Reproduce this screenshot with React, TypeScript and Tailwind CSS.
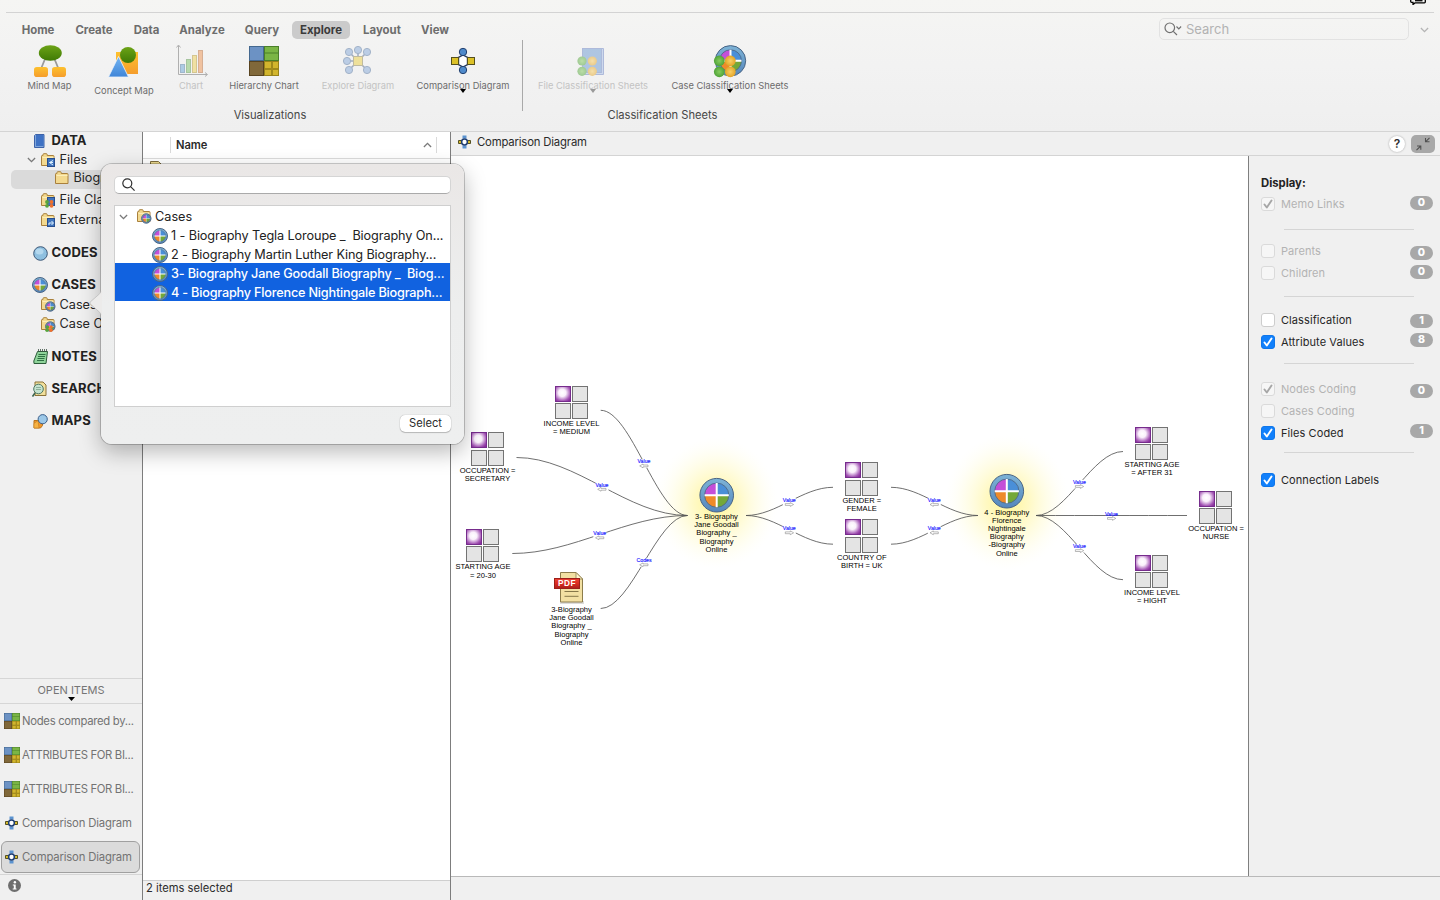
import React from "react";

type IconProps = { className?: string };

function Defs() {
  return (
    <svg className="absolute h-0 w-0" aria-hidden="true">
      <defs>
        <radialGradient id="purple" cx="0.45" cy="0.42" r="0.68">
          <stop offset="0" stopColor="#ffffff" />
          <stop offset="0.36" stopColor="#faf0fb" />
          <stop offset="0.8" stopColor="#a457b5" />
          <stop offset="1" stopColor="#8a309d" />
        </radialGradient>
        <radialGradient id="glow">
          <stop offset="0" stopColor="#fff27a" stopOpacity="0.8" />
          <stop offset="0.35" stopColor="#fff494" stopOpacity="0.55" />
          <stop offset="0.7" stopColor="#fff9b8" stopOpacity="0.24" />
          <stop offset="1" stopColor="#fffde8" stopOpacity="0" />
        </radialGradient>
        <linearGradient id="ring" x1="0" y1="0" x2="0" y2="1">
          <stop offset="0" stopColor="#7db3d6" />
          <stop offset="1" stopColor="#5587bd" />
        </linearGradient>
        <linearGradient id="leaf" x1="0" y1="0" x2="0" y2="1">
          <stop offset="0" stopColor="#6ca316" />
          <stop offset="1" stopColor="#3f7a05" />
        </linearGradient>
        <linearGradient id="amber" x1="0" y1="0" x2="0" y2="1">
          <stop offset="0" stopColor="#fdc12f" />
          <stop offset="1" stopColor="#f59d2c" />
        </linearGradient>
        <linearGradient id="sky" x1="0" y1="0" x2="0" y2="1">
          <stop offset="0" stopColor="#74b5f2" />
          <stop offset="1" stopColor="#3f85d8" />
        </linearGradient>
        <radialGradient id="ballGreen">
          <stop offset="0" stopColor="#86cc5e" />
          <stop offset="1" stopColor="#4fa338" />
        </radialGradient>
        <radialGradient id="ballGold">
          <stop offset="0" stopColor="#f8cf66" />
          <stop offset="1" stopColor="#e3a426" />
        </radialGradient>
        <linearGradient id="pdfRed" x1="0" y1="0" x2="0" y2="1">
          <stop offset="0" stopColor="#ea4433" />
          <stop offset="0.5" stopColor="#dc2c22" />
          <stop offset="1" stopColor="#a81f1b" />
        </linearGradient>
      </defs>
    </svg>
  );
}

function CaseGlyph({ cx, cy, r }: { cx: number; cy: number; r: number }) {
  const i = r * 0.7;
  return (
    <g>
      <circle cx={cx} cy={cy} r={r - 0.5} fill="url(#ring)" stroke="#4a6585" strokeWidth="1" />
      <path d={`M${cx} ${cy}V${cy - i}A${i} ${i} 0 0 0 ${cx - i} ${cy}Z`} fill="#c44fd8" />
      <path d={`M${cx} ${cy}H${cx + i}A${i} ${i} 0 0 0 ${cx} ${cy - i}Z`} fill="#4a8fd8" />
      <path d={`M${cx} ${cy}H${cx - i}A${i} ${i} 0 0 0 ${cx} ${cy + i}Z`} fill="#ee8a2a" />
      <path d={`M${cx} ${cy}V${cy + i}A${i} ${i} 0 0 0 ${cx + i} ${cy}Z`} fill="#74a838" />
      <circle cx={cx} cy={cy} r={i} fill="none" stroke="#4f6a88" strokeWidth={r > 12 ? 0.9 : 0.5} />
      <path
        d={`M${cx - i} ${cy}H${cx + i}M${cx} ${cy - i}V${cy + i}`}
        stroke="#ffffff"
        strokeWidth={r > 12 ? 2 : r > 6 ? 1 : 0.4}
      />
    </g>
  );
}

const CaseIcon = ({ className = "" }: IconProps) => (
  <svg viewBox="0 0 16 16" className={`h-4 w-4 shrink-0 ${className}`}>
    <CaseGlyph cx={8} cy={8} r={8} />
  </svg>
);

const HierarchyIcon = ({ className = "" }: IconProps) => (
  <svg viewBox="0 0 30 30" className={`shrink-0 ${className}`}>
    <rect width="15" height="15" fill="#44688f" />
    <rect x="1" y="1" width="13" height="13" fill="#6c92c4" />
    <rect x="15" width="15" height="15" fill="#4a7f2a" />
    <path d="M16 1h13v5.500H16zM16 7.500h13v6.500H16z" fill="#7ab545" />
    <rect y="15" width="15" height="15" fill="#594420" />
    <rect x="1" y="16" width="13" height="13" fill="#80683a" />
    <rect x="15" y="15" width="15" height="15" fill="#97821a" />
    <path d="M16 16h6v6h-6zM24 16h5v6h-5zM16 24h6v5h-6zM24 24h5v5h-5z" fill="#d2b52d" />
    <path d="M22.500 16h1v13h-1zM16 22.500h13v1H16z" fill="#a88f1e" />
  </svg>
);

const CompareIcon = ({ className = "" }: IconProps) => (
  <svg viewBox="0 0 13 14" className={`h-[14px] w-[13px] shrink-0 ${className}`}>
    <path d="M4.500 0.500h4v3h-4zM4.500 10.500h4v3h-4z" fill="#5b93d0" />
    <path d="M0.500 5.500h3v3h-3zM9.500 5.500h3v3h-3z" fill="#d9bd2c" stroke="#545022" />
    <circle cx="6.500" cy="7" r="2.900" fill="#ffffff" stroke="#1f3f73" strokeWidth="1.500" />
  </svg>
);

const FolderShape = () => (
  <g>
    <path
      d="M0.500 12.500V3.200q0-.7.7-.7H2V1.600q0-.9.800-.9h2.600q.8 0 .8.900v.9h6q.8 0 .8.800v9.200z"
      fill="#f3d98f"
      stroke="#a9803c"
    />
    <path d="M1.500 4.500H12.500" stroke="#fbedb9" />
  </g>
);

const FolderIcon = ({ kind }: { kind?: "file" | "fileClass" | "ext" | "case" | "caseClass" }) => (
  <svg viewBox="0 0 15 15" className="h-[15px] w-[15px] shrink-0">
    <FolderShape />
    {(kind === "file" || kind === "ext") && (
      <g>
        <rect x="6.500" y="5.500" width="7" height="8" fill="#3f74bd" stroke="#274d8e" />
        {kind === "file" ? (
          <path d="M12 7.500l-3.500 2 3.500 2.500M8.500 9.500h3.500" fill="none" stroke="#dff2ff" />
        ) : (
          <path d="M8 12V10h4M10.500 8l2 2-2 2" fill="none" stroke="#dff2ff" />
        )}
      </g>
    )}
    {kind === "fileClass" && (
      <g>
        <rect x="6.500" y="4.500" width="7" height="8" fill="#3f74bd" stroke="#274d8e" />
        <circle cx="6" cy="9" r="1.900" fill="#58a53c" />
        <circle cx="6" cy="12.800" r="1.900" fill="#58a53c" />
        <circle cx="10.500" cy="9" r="1.900" fill="#f0702c" />
        <circle cx="10.500" cy="12.800" r="1.900" fill="#f0702c" />
      </g>
    )}
    {(kind === "case" || kind === "caseClass") && <CaseGlyph cx={9.300} cy={9.500} r={5.200} />}
    {kind === "caseClass" && (
      <g>
        <circle cx="6.500" cy="10" r="1.700" fill="#58a53c" />
        <circle cx="6" cy="13.200" r="1.700" fill="#58a53c" />
        <circle cx="10" cy="10" r="1.700" fill="#f0702c" />
        <circle cx="10" cy="13.200" r="1.700" fill="#f0702c" />
      </g>
    )}
  </svg>
);

const BookIcon = () => (
  <svg viewBox="0 0 14 15" className="h-[15px] w-[14px] shrink-0">
    <path d="M3.500.5h8.500v13H2.500V1.500z" fill="#7ea6dc" stroke="#3d62a8" />
    <rect x="4" y="1" width="7.500" height="11" fill="#3f72c4" />
  </svg>
);

const CodesIcon = () => (
  <svg viewBox="0 0 15 15" className="ml-[0.5px] h-[15px] w-[15px] shrink-0">
    <circle cx="7.500" cy="7.500" r="6.800" fill="#8fc0e0" stroke="#3c5878" />
    <ellipse cx="6.500" cy="5.500" rx="4" ry="3" fill="#b4d8ee" />
  </svg>
);

const NotesIcon = () => (
  <svg viewBox="0 0 15 16" className="ml-[0.5px] h-[16px] w-[15px] shrink-0">
    <path d="M4.500 2.500h10L13 14.500H1L.8 12z" fill="#8fd49a" stroke="#2c5c3a" />
    <path d="M5.500 5.500h7M5 7.500h7M4.500 9.500h7M4 11.500h7" stroke="#2f7043" />
    <path d="M5.500 0v3M7.500 0v3M9.500 0v3M11.500 0v3M13.500 0v3" stroke="#3c5044" strokeWidth=".8" />
  </svg>
);

const SearchDocIcon = () => (
  <svg viewBox="0 0 15 16" className="h-[16px] w-[15px] shrink-0">
    <path d="M3 1h8l3 3v10.500H3z" fill="#f1df9b" stroke="#8a7238" />
    <circle cx="6.500" cy="8" r="4.800" fill="#c5e3cf" stroke="#4c7663" />
    <path d="M4 6.500h5M4 8.500h5" stroke="#8cb09b" />
    <path d="M3 12l-2.500 3.500" stroke="#3d6650" strokeWidth="1.600" />
  </svg>
);

const MapsIcon = () => (
  <svg viewBox="0 0 15 15" className="ml-[0.5px] h-[15px] w-[15px] shrink-0">
    <path d="M1 6.500h8.500v5l-2 2.500H1z" fill="#f0962c" stroke="#b8741c" />
    <path d="M1 9.500l4-3 1 7.500H1z" fill="#f6b243" stroke="#c98324" strokeWidth=".7" />
    <circle cx="9.700" cy="5.200" r="4.600" fill="#9cc8e8" stroke="#3c5f8a" />
  </svg>
);

const Chevron = ({ className = "" }: IconProps) => (
  <svg viewBox="0 0 10 6" className={`h-[6px] w-[9px] shrink-0 ${className}`} fill="none" stroke="currentColor" strokeWidth="1.500">
    <path d="M1 .8l4 4 4-4" />
  </svg>
);

/* ---------- ribbon ---------- */

const tabs = [
  { t: "Home", w: "w-[48px]" },
  { t: "Create", w: "w-[54px]" },
  { t: "Data", w: "w-[41px]" },
  { t: "Analyze", w: "w-[60px]" },
  { t: "Query", w: "w-[50px]" },
  { t: "Explore", w: "w-[58px]", on: true },
  { t: "Layout", w: "w-[54px]" },
  { t: "View", w: "w-[42px]" },
];

function Tool({ label, w, dim, drop, low, children }: { label: string; w: string; dim?: boolean; drop?: boolean; low?: boolean; children: React.ReactNode }) {
  return (
    <div className={`relative flex flex-col items-center ${w}`}>
      <svg viewBox="0 0 34 34" className={`h-[34px] w-[34px] ${dim ? "opacity-50" : ""}`}>
        {children}
      </svg>
      <span
        className={`text-[9.3px] leading-[14px] tracking-[0.01px] whitespace-nowrap ${low ? "mt-[6px]" : "mt-px"} ${dim ? "text-[#c3c3c3]" : "text-[#6c6c6c]"}`}
      >
        {label}
      </span>
      {drop && (
        <svg viewBox="0 0 6 4" className={`absolute top-[45px] h-[4px] w-[6px] ${dim ? "text-[#9a9a9a]" : "text-black"}`}>
          <path d="M0 0h6L3 4z" fill="currentColor" />
        </svg>
      )}
    </div>
  );
}

const Balls = ({ x, y, s, r }: { x: number; y: number; s: number; r: number }) => (
  <g>
    <circle cx={x} cy={y} r={r} fill="url(#ballGreen)" />
    <circle cx={x} cy={y + s} r={r} fill="url(#ballGreen)" />
    <circle cx={x + s} cy={y} r={r} fill="url(#ballGold)" />
    <circle cx={x + s} cy={y + s} r={r} fill="url(#ballGold)" />
  </g>
);

function Ribbon() {
  return (
    <header className="flex h-[132px] shrink-0 flex-col border-b border-[#d4d4d4] bg-linear-to-b from-[#f5f5f3] via-[#f2f2f2] to-[#efefef]">
      <div className="mx-[6px] flex h-[13px] shrink-0 items-start justify-end border-b border-[#d3d3d3] pr-[8px]">
        <svg viewBox="0 0 16 5" className="h-[5px] w-4" fill="none" stroke="#000000" strokeWidth="1.300">
          <path d="M.7 0v1.500q0 .8.800.8H3v2.200l2-1.600h9.500q.8 0 .8-.8V0" />
          <path d="M5 .7h7.500" />
        </svg>
      </div>
      <div className="flex h-[29px] shrink-0 items-center pt-[6px] pl-[14px]">
        <nav className="-mt-px flex gap-[5px]">
          {tabs.map((tab) => (
            <div
              key={tab.t}
              className={`flex h-[18px] items-center justify-center rounded-[5px] pt-[2px] text-[11.4px] font-bold ${tab.w} ${tab.on ? "bg-[#cbcbcb] text-[#3b3b3b]" : "text-[#6d6d6d]"}`}
            >
              {tab.t}
            </div>
          ))}
        </nav>
        <div className="mt-[-3px] mr-[11px] ml-auto flex h-[22px] w-[250px] items-center rounded-[5px] border border-[#e2e2e2] pl-[4px] text-[#707070]">
          <svg viewBox="0 0 18 14" className="h-[14px] w-[18px]" fill="none" stroke="currentColor" strokeWidth="1.200">
            <circle cx="5.800" cy="5.800" r="4.800" />
            <path d="M9.300 9.300l3.700 3.700M12.500 4.500l2.300 2.300 2.300-2.300" />
          </svg>
          <span className="ml-[4px] pt-px text-[13px] text-[#b2b2b2]">Search</span>
        </div>
        <Chevron className="mt-[-2px] mr-[11px] text-[#b5b5b5]" />
      </div>
      <div className="flex pl-[14px]">
        <section className="w-[508px] pt-[2px]">
          <div className="flex h-[62px]">
            <Tool label="Mind Map" w="w-[71px]">
              <path d="M12 15L7.500 26M21.500 15L26 26" stroke="#9a9a9a" strokeWidth="1.800" />
              <ellipse cx="17.300" cy="9" rx="11.500" ry="7.700" fill="url(#leaf)" />
              <rect x="1" y="23" width="14" height="10" rx="2.800" fill="url(#amber)" />
              <rect x="19" y="23" width="14" height="10" rx="2.800" fill="url(#amber)" />
            </Tool>
            <Tool label="Concept Map" w="w-[78px]" low>
              <rect x="9" y="8" width="22" height="22" fill="url(#amber)" />
              <circle cx="21" cy="11" r="8" fill="url(#leaf)" />
              <path d="M11.500 12.500L21.500 33H1.500z" fill="url(#sky)" stroke="#eef4fb" strokeWidth=".8" />
            </Tool>
            <Tool label="Chart" w="w-[56px]" dim>
              <path d="M4.500 1.500V30.500H33M2.500 3.500l2-2.500 2 2.500M31 28.500l2.500 2-2.500 2" fill="none" stroke="#6f6f6f" />
              <rect x="6.500" y="20.500" width="4" height="8" fill="#6aa6d8" stroke="#4f7ea8" />
              <rect x="12.500" y="15.500" width="4" height="13" fill="#7fc46a" stroke="#5d9a4c" />
              <rect x="18.500" y="11.500" width="4" height="17" fill="#efd052" stroke="#b79a32" />
              <rect x="24.500" y="6.500" width="4" height="22" fill="#ef9350" stroke="#bd6e36" />
            </Tool>
            <Tool label="Hierarchy Chart" w="w-[90px]">
              <svg x="2" y="2" width="30" height="30" viewBox="0 0 30 30">
                <HierarchyIcon />
              </svg>
            </Tool>
            <Tool label="Explore Diagram" w="w-[98px]" dim>
              <path d="M8 8l9 9 9-9M17 6v11H6M17 17l-9 9M17 17l9 9" fill="none" stroke="#4c6690" strokeWidth="1.500" />
              <rect x="12.500" y="12.500" width="9" height="9" fill="#ecd044" stroke="#8d8450" />
              {[[8, 8], [17, 6], [26, 8], [6, 17], [8, 26], [26, 26]].map(([x, y]) => (
                <circle key={`${x}-${y}`} cx={x} cy={y} r="3.600" fill="#85a9da" stroke="#55749f" />
              ))}
            </Tool>
            <Tool label="Comparison Diagram" w="w-[112px]" drop>
              <path d="M17 11l4.500 2.500v7L17 23l-4.500-2.500v-7z" fill="#ffffff" stroke="#22375f" strokeWidth="1.400" />
              <circle cx="17" cy="8" r="3.700" fill="#4f8acb" stroke="#22406e" />
              <circle cx="17" cy="26" r="3.700" fill="#4f8acb" stroke="#22406e" />
              <rect x="5.500" y="13.500" width="7" height="7" fill="#dcc128" stroke="#55501f" />
              <rect x="21.500" y="13.500" width="7" height="7" fill="#dcc128" stroke="#55501f" />
            </Tool>
          </div>
          <p className="pl-[4px] text-center text-[11.200px] leading-[18px] text-[#474747]">Visualizations</p>
        </section>
        <div className="-mt-[2px] h-[71px] w-px bg-[#a9a9a9]" />
        <section className="w-[279px] pt-[2px]">
          <div className="flex h-[62px]">
            <Tool label="File Classification Sheets" w="w-[140px]" dim drop>
              <path d="M7 4.500h20.500v26H9" fill="#a9c2ea" stroke="#6c83c4" />
              <rect x="6.500" y="4.500" width="19" height="24" fill="#6d9ad3" stroke="#6c83c4" />
              <Balls x={6} y={17} s={10.300} r={4.600} />
            </Tool>
            <Tool label="Case Classification Sheets" w="w-[134px]" drop>
              <CaseGlyph cx={17.500} cy={16.800} r={15.700} />
              <Balls x={6.300} y={16.800} s={11} r={5.400} />
            </Tool>
          </div>
          <p className="text-center text-[11.150px] leading-[18px] text-[#474747]">Classification Sheets</p>
        </section>
      </div>
    </header>
  );
}

/* ---------- sidebar ---------- */

function Head({ icon, label, className }: { icon: React.ReactNode; label: string; className: string }) {
  return (
    <div className={`flex items-center pl-[32px] text-[13px] font-bold tracking-[0.15px] text-[#222222] ${className}`}>
      <span className="flex w-[19.500px] shrink-0 items-center">{icon}</span>
      {label}
    </div>
  );
}

function Leaf({ kind, label, className = "h-5", open }: { kind: "file" | "fileClass" | "ext" | "case" | "caseClass"; label: string; className?: string; open?: boolean }) {
  return (
    <div className={`flex items-center text-[12.7px] whitespace-nowrap text-[#262626] ${className}`}>
      <span className="flex w-[41px] shrink-0 pl-[27px]">{open && <Chevron className="text-[#7a7a7a]" />}</span>
      <FolderIcon kind={kind} />
      <span className="ml-[3.500px]">{label}</span>
    </div>
  );
}

const openItems = [
  { t: "Nodes compared by...", h: true, k: "tracking-[-0.29px]" },
  { t: "ATTRIBUTES FOR BI...", h: true, k: "tracking-[-0.33px]" },
  { t: "ATTRIBUTES FOR BI...", h: true, k: "tracking-[-0.33px]" },
  { t: "Comparison Diagram", k: "tracking-[-0.17px]" },
  { t: "Comparison Diagram", on: true, k: "tracking-[-0.17px]" },
];

function Sidebar() {
  return (
    <aside className="flex w-[143px] shrink-0 flex-col overflow-hidden border-r border-[#7d7d7d] bg-[#f0f0f0]">
      <Head icon={<BookIcon />} label="DATA" className="h-[18px]" />
      <Leaf kind="file" label="Files" open />
      <div className="ml-[11px] flex h-[19px] items-center rounded-l-[5px] bg-[#dadada] pb-[3px] pl-[44px] text-[12.7px] whitespace-nowrap text-[#262626]">
        <FolderIcon />
        <span className="ml-[3.500px]">Biogr</span>
      </div>
      <Leaf kind="fileClass" label="File Clas" className="mt-px h-5" />
      <Leaf kind="ext" label="External" />
      <Head icon={<CodesIcon />} label="CODES" className="mt-[13px] h-5" />
      <Head icon={<CaseIcon />} label="CASES" className="mt-[12px] h-5" />
      <Leaf kind="case" label="Cases" className="h-[19px]" />
      <Leaf kind="caseClass" label="Case C" />
      <Head icon={<NotesIcon />} label="NOTES" className="mt-[13px] h-5" />
      <Head icon={<SearchDocIcon />} label="SEARCH" className="mt-[12px] h-5" />
      <Head icon={<MapsIcon />} label="MAPS" className="mt-[12px] h-5" />

      <div className="mt-auto flex h-[26px] shrink-0 flex-col items-center border-y border-[#d6d6d6] text-[11px] leading-[23px] text-[#757575]">
        <span className="h-[18px]">OPEN ITEMS</span>
        <svg viewBox="0 0 7 4" className="h-[4px] w-[7px]">
          <path d="M0 0h7L3.500 4z" fill="#000000" />
        </svg>
      </div>
      <div className="flex shrink-0 flex-col">
        {openItems.map((o, i) => (
          <div key={i} className="flex h-[34px] items-center pr-[2px] pl-px">
            <div
              className={`flex h-8 w-full items-center rounded-[6px] border text-[11.300px] whitespace-nowrap text-[#737373] ${o.k} ${o.on ? "border-[#a0a0a0] bg-[#dbdbdb]" : "border-transparent"}`}
            >
              <span className="flex w-[20px] shrink-0 justify-center">
                {o.h ? <HierarchyIcon className="h-4 w-4" /> : <CompareIcon className="mr-px" />}
              </span>
              {o.t}
            </div>
          </div>
        ))}
      </div>
      <div className="flex h-[26px] shrink-0 items-start border-t border-[#d6d6d6] pt-[3.500px] pl-[7.500px]">
        <svg viewBox="0 0 13 13" className="h-[13px] w-[13px]">
          <circle cx="6.500" cy="6.500" r="6.500" fill="#6e6e6e" />
          <circle cx="6.900" cy="3.200" r="1.200" fill="#ffffff" />
          <path d="M4.800 5.400h2.900v4.100h.8v1H4.700v-1h1.100V6.400h-1z" fill="#ffffff" />
        </svg>
      </div>
    </aside>
  );
}

/* ---------- list ---------- */

function ListPane() {
  return (
    <section className="flex w-[308px] shrink-0 flex-col border-r border-[#7d7d7d] bg-white">
      <div className="flex h-[27px] items-center border-b border-[#dcdcdc] pl-[27px]">
        <span className="h-4 w-px bg-[#dadada]" />
        <span className="ml-[5px] pt-px text-[11.200px] font-semibold tracking-[-0.1px] text-[#2a2a2a]">Name</span>
        <Chevron className="ml-auto rotate-180 text-[#7a7a7a]" />
        <span className="mr-[13px] ml-[4px] h-4 w-px bg-[#dadada]" />
      </div>
      <svg viewBox="0 0 12 14" className="mt-[2px] ml-[7px] h-[14px] w-3">
        <path d="M.5.5h8l3 3v10H.5z" fill="#e9d68c" stroke="#7c6b3c" />
      </svg>
      <div className="mt-auto h-[20px] border-t border-[#cfcfcf] bg-[#f0f0f0] pl-[3px] text-[11.200px] leading-[15px] text-[#2b2b2b]">
        2 items selected
      </div>
    </section>
  );
}

/* ---------- diagram ---------- */

const attributes = [
  { x: 555, y: 386, g: 17, c: 571.5, b: 426, lines: ["INCOME LEVEL", "= MEDIUM"] },
  { x: 471, y: 432, g: 18, c: 487.5, b: 473, lines: ["OCCUPATION =", "SECRETARY"] },
  { x: 466, y: 529, g: 17, c: 483, b: 569.4, lines: ["STARTING AGE", "= 20-30"] },
  { x: 845, y: 462, g: 18, c: 861.8, b: 503, lines: ["GENDER =", "FEMALE"] },
  { x: 845, y: 519, g: 18, c: 861.8, b: 560, lines: ["COUNTRY OF", "BIRTH = UK"] },
  { x: 1135, y: 427, g: 17, c: 1152, b: 467, lines: ["STARTING AGE", "= AFTER 31"] },
  { x: 1199, y: 491, g: 17, c: 1216, b: 531.3, lines: ["OCCUPATION =", "NURSE"] },
  { x: 1135, y: 555, g: 17, c: 1152, b: 595.2, lines: ["INCOME LEVEL", "= HIGHT"] },
];

const edges = [
  { a: [600.7, 410.3], z: [687.5, 515.5], l: [644, 463.3], left: true, t: "Value" },
  { a: [516.5, 457.5], z: [687.5, 515.5], l: [602, 486.7], left: true, t: "Value" },
  { a: [512.3, 553.5], z: [687.5, 515.5], l: [599.8, 535.2], left: true, t: "Value" },
  { a: [600.7, 608.5], z: [687.5, 515.5], l: [644, 562.2], left: true, t: "Codes" },
  { a: [833, 487.3], z: [746, 515.5], l: [789.3, 501.9], t: "Value" },
  { a: [833, 544.2], z: [746, 515.5], l: [789.3, 530.2], t: "Value" },
  { a: [891, 487.3], z: [978, 515.5], l: [934.3, 501.9], left: true, t: "Value" },
  { a: [891, 544.2], z: [978, 515.5], l: [934.3, 530.2], left: true, t: "Value" },
  { a: [1123, 451.5], z: [1036, 515.5], l: [1079.4, 483.9], t: "Value" },
  { a: [1187, 515.5], z: [1036, 515.5], l: [1111.5, 515.8], t: "Value" },
  { a: [1123, 579.7], z: [1036, 515.5], l: [1079.4, 548], t: "Value" },
];

function Lines({ c, b, lines }: { c: number; b: number; lines: string[] }) {
  return (
    <g fontSize="7.550" textAnchor="middle" fill="#000000">
      {lines.map((t, i) => (
        <text key={i} x={c} y={b + i * 8.1}>
          {t}
        </text>
      ))}
    </g>
  );
}

function Diagram() {
  return (
    <svg viewBox="451 156 797 720" className="h-[720px] w-[797px] shrink-0 bg-white" fontFamily="'Liberation Sans', Arial, sans-serif">
      <ellipse cx="716" cy="503" rx="62" ry="66" fill="url(#glow)" />
      <ellipse cx="1007" cy="502" rx="62" ry="68" fill="url(#glow)" />
      {edges.map((e, i) => {
        const [x1, y1] = e.a;
        const [x2, y2] = e.z;
        const d = (x2 - x1) * 0.35;
        const [lx, ly] = e.l;
        const s = e.left ? -1 : 1;
        return (
          <g key={i}>
            <path d={`M${x1} ${y1}C${x1 + d} ${y1} ${x2 - d} ${y2} ${x2} ${y2}`} fill="none" stroke="#555555" strokeWidth=".85" />
            {y1 !== y2 && <rect x={lx - 6.5} y={ly - 4} width="13" height="8.500" fill="#ffffff" />}
            <text x={lx} y={ly} fontSize="5.200" textAnchor="middle" fill="#1a1aff" stroke="#1a1aff" strokeWidth=".15">
              {e.t}
            </text>
            <path
              d={`M${lx - s * 4} ${ly + 1.7}h${s * 5}v-1l${s * 3.3} 1.900l${-s * 3.300} 1.900v-1h${-s * 5}z`}
              fill="#ffffff"
              stroke="#8a8a8a"
              strokeWidth=".6"
            />
          </g>
        );
      })}
      {attributes.map((n, i) => (
        <g key={i}>
          <rect x={n.x + 0.5} y={n.y + 0.5} width="15" height="15" fill="url(#purple)" stroke="#762c8c" />
          {[[17, 0], [0, n.g], [17, n.g]].map(([dx, dy]) => (
            <rect key={`${dx}-${dy}`} x={n.x + dx + 0.5} y={n.y + dy + 0.5} width="15" height="15" fill="#e4e4e4" stroke="#737373" />
          ))}
          <Lines c={n.c} b={n.b} lines={n.lines} />
        </g>
      ))}
      <g>
        <rect x="560" y="601" width="24" height="3" fill="#dcdcdc" />
        <path d="M560.500 572.500h15.500l6.500 6.500v23h-22z" fill="#f2e0a3" stroke="#8d7d4c" />
        <path d="M576 572.500v6.500h6.500z" fill="#fff5cf" stroke="#8d7d4c" strokeWidth=".8" />
        <path d="M564.500 591.500h14M564.500 596.300h14" stroke="#857749" />
        <rect x="554.500" y="578.500" width="25" height="10" fill="url(#pdfRed)" stroke="#9c1f1a" />
        <text x="567" y="586.300" fontSize="8.200" fontWeight="bold" textAnchor="middle" fill="#ffffff" letterSpacing=".5">
          PDF
        </text>
      </g>
      <Lines c={571.5} b={612.2} lines={["3-Biography", "Jane Goodall", "Biography _", "Biography", "Online"]} />
      <CaseGlyph cx={716.7} cy={495.2} r={17.300} />
      <Lines c={716.5} b={519.2} lines={["3- Biography", "Jane Goodall", "Biography _", "Biography", "Online"]} />
      <CaseGlyph cx={1006.8} cy={491.2} r={17.300} />
      <Lines c={1006.8} b={515} lines={["4 - Biography", "Florence", "Nightingale", "Biography", "-Biography", "Online"]} />
    </svg>
  );
}

/* ---------- display panel ---------- */

function Option({ label, on, dim, n, shift = "" }: { label: string; on?: boolean; dim?: boolean; n?: number; shift?: string }) {
  const box = on && !dim ? "bg-[#1180fb] text-white border-[#0f76ea]" : dim ? "bg-[#f6f6f6] text-[#a6a6a6] border-[#dadada]" : "bg-white border-[#cdcdcd]";
  return (
    <div className="flex h-[22px] items-center pr-[7px] pl-[12px]">
      <span className={`flex h-[14px] w-[14px] items-center justify-center rounded-[3px] border ${box}`}>
        {on && (
          <svg viewBox="0 0 10 10" className="h-[10px] w-[10px]" fill="none" stroke="currentColor" strokeWidth="1.900" strokeLinecap="round" strokeLinejoin="round">
            <path d="M1.500 5.500l2.300 3L8.500 1.500" />
          </svg>
        )}
      </span>
      <span className={`ml-[6px] pt-px text-[11px] tracking-[0.08px] whitespace-nowrap ${dim ? "text-[#b3b3b3]" : "text-[#262626]"}`}>{label}</span>
      {n !== undefined && (
        <span className={`ml-auto flex h-[14px] w-[23px] items-center justify-center rounded-full bg-[#a8a8a8] text-[10.500px] font-extrabold text-white ${shift}`}>
          {n}
        </span>
      )}
    </div>
  );
}

const Rule = ({ className }: { className: string }) => <div className={`mr-[26px] ml-[35px] h-px bg-[#d5d5d5] ${className}`} />;

function DisplayPanel() {
  return (
    <aside className="flex flex-1 flex-col border-l border-[#7f7f7f] bg-[#f0f0f0] pt-[18px]">
      <h2 className="h-[19px] pl-[12px] text-[11.300px] leading-[19px] font-bold text-[#222222]">Display:</h2>
      <Option label="Memo Links" on dim n={0} shift="-translate-y-px" />
      <Rule className="mt-[14px]" />
      <div className="h-[10px]" />
      <Option label="Parents" dim n={0} shift="translate-y-[2px]" />
      <Option label="Children" dim n={0} shift="-translate-y-px" />
      <Rule className="mt-[12px] mb-[12px]" />
      <Option label="Classification" n={1} shift="translate-y-px" />
      <Option label="Attribute Values" on n={8} shift="-translate-y-[2px]" />
      <Rule className="mt-[10px] mb-[14px]" />
      <Option label="Nodes Coding" on dim n={0} shift="translate-y-[2px]" />
      <Option label="Cases Coding" dim />
      <Option label="Files Coded" on n={1} shift="-translate-y-[2px]" />
      <Rule className="mt-[8px] mb-[16px]" />
      <Option label="Connection Labels" on />
    </aside>
  );
}

function Detail() {
  return (
    <section className="flex flex-1 flex-col bg-[#f0f0f0]">
      <div className="flex h-[24px] shrink-0 items-center border-b border-[#d4d4d4] pr-[5px] pl-[6.500px]">
        <CompareIcon className="mb-[3px]" />
        <span className="mb-[2px] ml-[6.500px] text-[11.300px] tracking-[-0.16px] text-[#2a2a2a]">Comparison Diagram</span>
        <span className="ml-auto flex h-4 w-4 items-center justify-center rounded-full bg-white text-[12px] font-semibold text-[#2e2e2e] shadow-[0_0_2px_rgba(0,0,0,0.35)]">?</span>
        <span className="ml-[6px] flex h-[18px] w-6 items-center justify-center rounded-[5px] bg-[#a8a8a8]">
          <svg viewBox="0 0 16 14" className="h-[14px] w-4" fill="none" stroke="#515151" strokeWidth="1.100">
            <path d="M14.500 .8l-4 4M10.500 1v3.800h4M1.500 13.200l4.200-4.200M2 9h3.800v3.800" />
          </svg>
        </span>
      </div>
      <div className="flex h-[721px] border-b border-[#b9b9b9]">
        <Diagram />
        <DisplayPanel />
      </div>
    </section>
  );
}

/* ---------- case picker ---------- */

const cases = [
  { t: "1 - Biography Tegla Loroupe _\u00a0 Biography On...", k: "tracking-[-0.11px]" },
  { t: "2 - Biography Martin Luther King Biography...", k: "tracking-[-0.13px]" },
  { t: "3- Biography Jane Goodall Biography _\u00a0 Biog...", on: true, k: "tracking-[-0.17px]" },
  { t: "4 - Biography Florence Nightingale Biograph...", on: true, k: "tracking-[-0.21px]" },
];

function CasePicker() {
  return (
    <div className="absolute top-[164px] left-[101px] h-[280px] w-[363px] rounded-[11px] bg-linear-to-b from-[#eae7e6] via-[#edeeee] to-[#eeefef] px-[13px] pt-[12px] shadow-[0_0_0_1px_rgba(0,0,0,0.2),0_8px_22px_rgba(0,0,0,0.28)]">
      <svg viewBox="0 0 13 28" className="absolute top-[125px] left-[-12px] h-7 w-[13px]">
        <path d="M13 1C12 3 11.500 4 10 5.300L1.200 13Q.4 14 1.200 15L10 22.700C11.500 24 12 25 13 27z" fill="#ecebea" />
        <path d="M11.700 2.500C11.300 4 11 4.500 10 5.300L1.200 13Q.4 14 1.200 15L10 22.700C11 23.500 11.300 24 11.700 25.500" fill="none" stroke="#bcbcbc" strokeWidth=".8" />
      </svg>
      <div className="flex h-[18px] items-center rounded-[5px] border border-[#d5d5d5] border-b-[#aaaaaa] bg-white pb-px pl-[6.500px]">
        <svg viewBox="0 0 13 13" className="h-[13px] w-[13px]" fill="none" stroke="#2f2f2f" strokeWidth="1.200">
          <circle cx="5.300" cy="5.300" r="4.500" />
          <path d="M8.600 8.600l4 4" />
        </svg>
      </div>
      <div className="mt-[11px] h-[202px] border border-[#cfcfcf] bg-white">
        <div className="flex h-[19px] items-center pt-[2px] pl-[4px] text-[12.700px] text-[#222222]">
          <Chevron className="mr-[9px] text-[#7a7a7a]" />
          <FolderIcon kind="case" />
          <span className="ml-[3px]">Cases</span>
        </div>
        {cases.map((c) => (
          <div key={c.t} className={`flex h-[19px] items-center pt-[2px] pl-[37px] text-[12.700px] whitespace-nowrap ${c.on ? "bg-[#1162e0] font-medium text-white" : "text-[#222222]"}`}>
            <CaseIcon />
            <span className={`ml-[3px] ${c.k}`}>{c.t}</span>
          </div>
        ))}
      </div>
      <div className="mt-[8px] flex justify-end">
        <button className="h-[17px] w-[51px] rounded-[5px] bg-white text-[11.200px] leading-[17px] text-[#2b2b2b] shadow-[0_0_1px_rgba(0,0,0,0.4),0_1px_1px_rgba(0,0,0,0.2)]">Select</button>
      </div>
    </div>
  );
}

export default function App() {
  return (
    <div className="relative flex h-[900px] w-[1440px] flex-col overflow-hidden bg-[#f0f0f0] font-[Inter,sans-serif]">
      <Defs />
      <Ribbon />
      <main className="flex min-h-0 flex-1">
        <Sidebar />
        <ListPane />
        <Detail />
      </main>
      <CasePicker />
    </div>
  );
}
